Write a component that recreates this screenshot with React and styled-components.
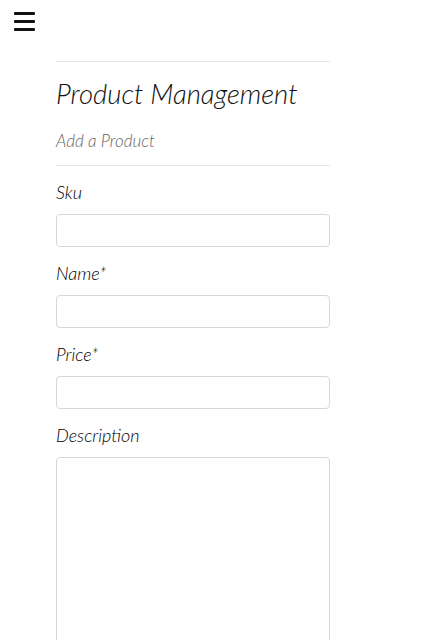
import React from "react";
import styled, { createGlobalStyle } from "styled-components";

const Global = createGlobalStyle`
  html, body { margin: 0; padding: 0; background: #fff; }
  body { font-family: Lato, "Open Sans", sans-serif; color: #111; }
  * { box-sizing: border-box; }
`;

const Nav = styled.header`
  height: 40px;
  padding: 12px 14px;
`;

const Burger = styled.button`
  display: flex;
  flex-direction: column;
  gap: 5px;
  width: 21px;
  padding: 0;
  border: 0;
  background: none;
  span {
    display: block;
    height: 3px;
    background: #111;
    border-radius: 1px;
  }
`;

const Main = styled.main`
  margin-left: 56px;
  width: 274px;
  padding-top: 21px;
`;

const Rule = styled.hr`
  margin: 0;
  border: 0;
  border-top: 1px solid #e6e6e6;
`;

const Title = styled.h1`
  margin: 15px 0 0;
  font-size: 27.5px;
  line-height: 33px;
  font-weight: 300;
  font-style: italic;
  color: #111;
`;

const Subtitle = styled.h2`
  margin: 21px 0 14px;
  font-size: 17px;
  line-height: 1.2;
  font-weight: 300;
  font-style: italic;
  color: #666;
`;

const Form = styled.form`
  display: flex;
  flex-direction: column;
  padding-top: 15px;
`;

const Field = styled.div`
  display: flex;
  flex-direction: column;
  margin-bottom: 15px;
`;

const Label = styled.label`
  font-size: 18px;
  line-height: 22px;
  font-weight: 300;
  font-style: italic;
  color: #000;
  margin-bottom: 11px;
`;

const Input = styled.input`
  width: 100%;
  height: 33px;
  border: 1px solid #d4d7dc;
  border-radius: 4px;
  background: #fff;
  font: inherit;
  outline: none;
`;

const Area = styled.textarea`
  width: 100%;
  height: 260px;
  border: 1px solid #d4d7dc;
  border-radius: 4px;
  background: #fff;
  resize: none;
  outline: none;
`;

export default function App() {
  return (
    <>
      <Global />
      <Nav>
        <Burger aria-label="menu">
          <span />
          <span />
          <span />
        </Burger>
      </Nav>
      <Main>
        <Rule />
        <Title>Product Management</Title>
        <Subtitle>Add a Product</Subtitle>
        <Rule />
        <Form>
          <Field>
            <Label>Sku</Label>
            <Input />
          </Field>
          <Field>
            <Label>Name*</Label>
            <Input />
          </Field>
          <Field>
            <Label>Price*</Label>
            <Input />
          </Field>
          <Field>
            <Label>Description</Label>
            <Area />
          </Field>
        </Form>
      </Main>
    </>
  );
}
